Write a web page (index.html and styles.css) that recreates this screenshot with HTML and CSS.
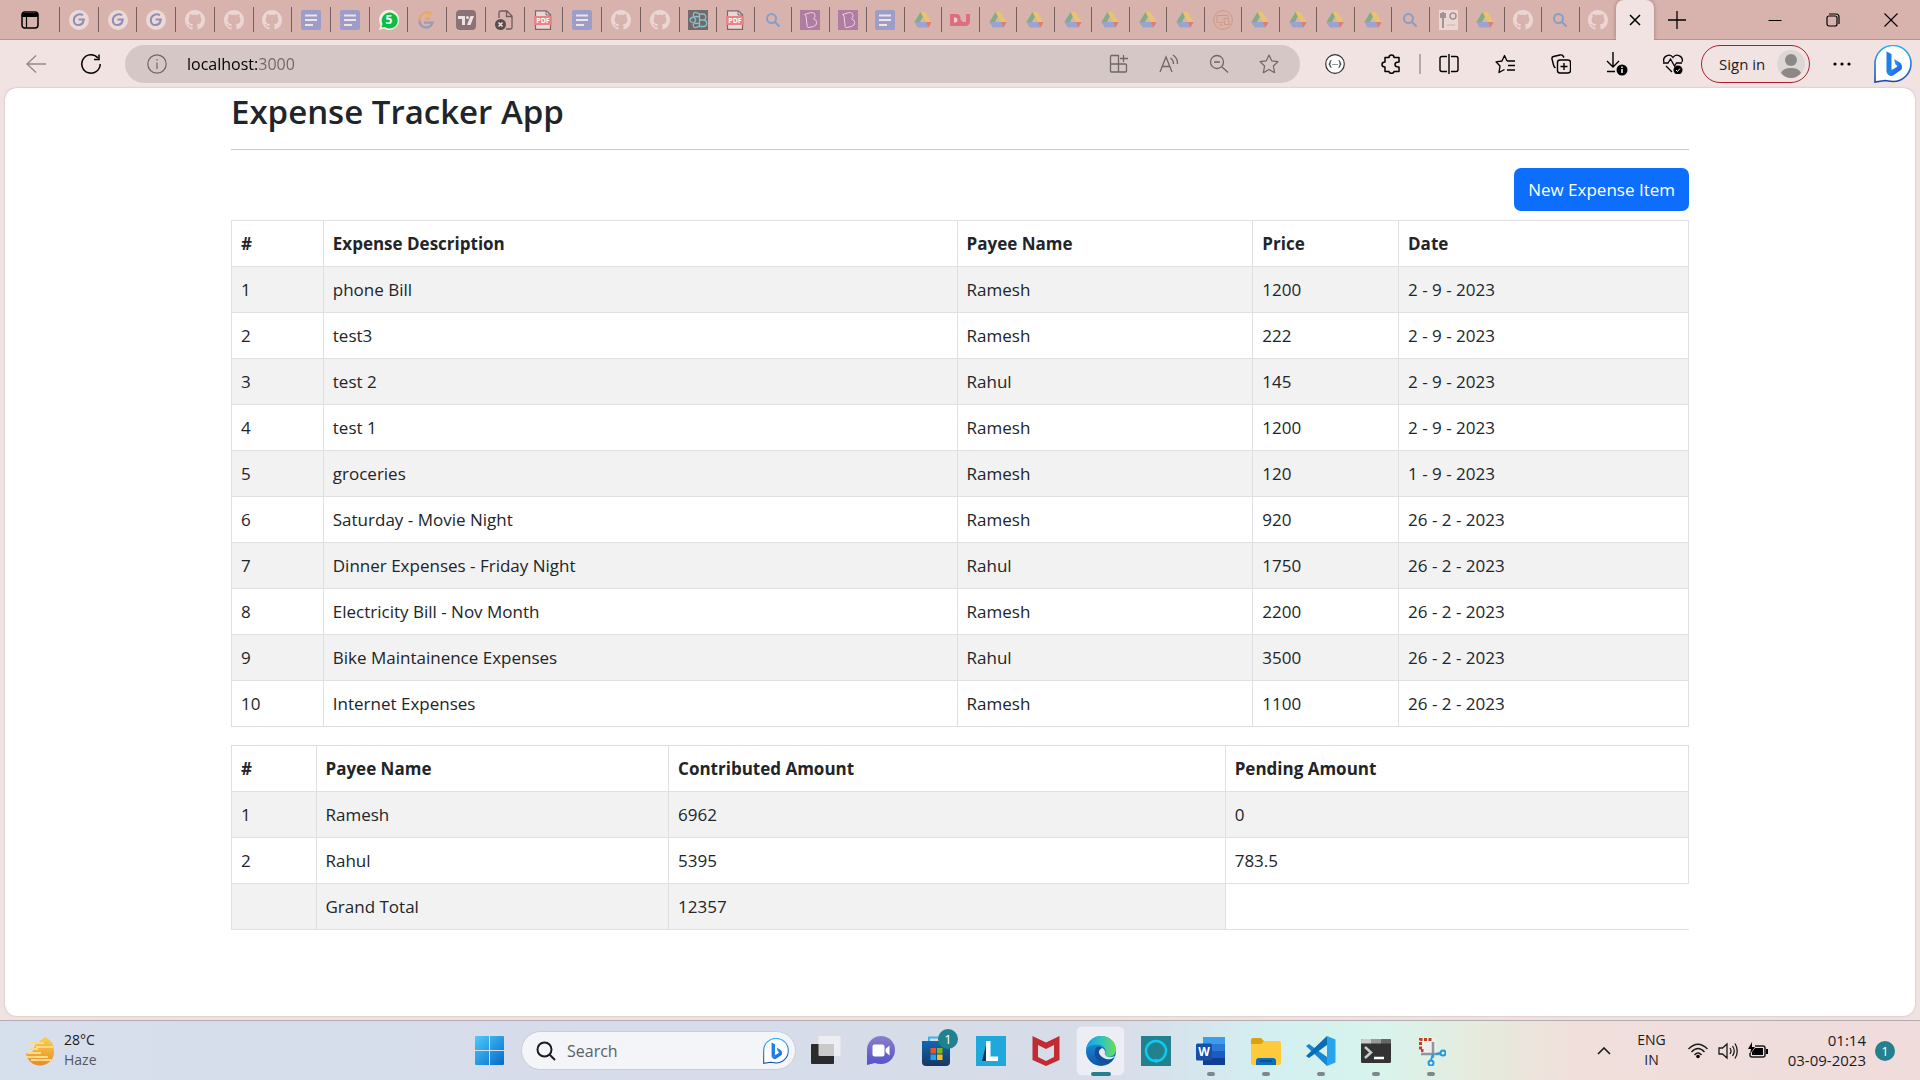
FILE: index.html
```html
<!DOCTYPE html>
<html lang="en">
<head>
<meta charset="utf-8">
<title>Expense Tracker App</title>
<link rel="stylesheet" href="styles.css">
</head>
<body>
<svg class="sprite" aria-hidden="true">
  <defs>
    <linearGradient id="bing-blue" x1="0" y1="0" x2="1" y2="1"><stop offset="0" stop-color="#37bdf5"/><stop offset="1" stop-color="#174ae4"/></linearGradient>
    <linearGradient id="bing-ring" x1="0" y1="0" x2="0" y2="1"><stop offset="0" stop-color="#2fb4ee"/><stop offset="1" stop-color="#1b48ae"/></linearGradient>
    <linearGradient id="win-blue" x1="0" y1="0" x2="1" y2="1"><stop offset="0" stop-color="#4dcbfb"/><stop offset="1" stop-color="#0669c9"/></linearGradient>
    <linearGradient id="edge-green" x1="0" y1="0" x2="1" y2="0"><stop offset="0" stop-color="#1a9de0"/><stop offset="0.5" stop-color="#2cc4c4"/><stop offset="1" stop-color="#6fdc52"/></linearGradient>
    <linearGradient id="edge-blue" x1="0" y1="0" x2="0" y2="1"><stop offset="0" stop-color="#1d9be2"/><stop offset="1" stop-color="#0d55a8"/></linearGradient>
    <linearGradient id="chat" x1="0" y1="0" x2="0" y2="1"><stop offset="0" stop-color="#8a80c8"/><stop offset="1" stop-color="#5551cc"/></linearGradient>
    <linearGradient id="sun" x1="0" y1="0" x2="0" y2="1"><stop offset="0" stop-color="#fbd14b"/><stop offset="1" stop-color="#ea8a26"/></linearGradient>
    <linearGradient id="store" x1="0" y1="0" x2="0" y2="1"><stop offset="0" stop-color="#1266b3"/><stop offset="1" stop-color="#173760"/></linearGradient>
    <linearGradient id="g-warm" x1="0" y1="0" x2="0" y2="1"><stop offset="0.4" stop-color="#e9a66e"/><stop offset="0.7" stop-color="#9a9ab8"/></linearGradient>
  </defs>
  <symbol id="f-g" viewBox="0 0 20 20"><circle cx="10" cy="10" r="10" fill="#ecd9d6"/><path d="M14 5.2C10 3 4.800 5.500 4.800 10.500c0 6 9 6.500 10-1H9.500" fill="none" stroke="#8d8fb7" stroke-width="2"/></symbol>
  <symbol id="f-gwarm" viewBox="0 0 20 20"><path d="M15 4.500C10-.5 2 4 2.500 11c.5 8 11 8.500 13 1.500H7M13 8.500H8" fill="none" stroke="url(#g-warm)" stroke-width="2.500"/><path d="M8 8.500c1-3 5-5 8-3" fill="none" stroke="#e9b269" stroke-width="2"/></symbol>
  <symbol id="f-gh" viewBox="0 0 16 16"><path fill="#ecd6d3" d="M8 0C3.580 0 0 3.580 0 8c0 3.540 2.290 6.530 5.470 7.590.4.070.55-.17.55-.38 0-.19-.01-.82-.01-1.490-2.010.37-2.530-.49-2.690-.94-.09-.23-.48-.94-.82-1.130-.28-.15-.68-.52-.01-.53.63-.01 1.080.58 1.230.82.72 1.210 1.870.87 2.330.66.070-.52.28-.87.51-1.070-1.780-.2-3.640-.89-3.640-3.950 0-.87.31-1.590.82-2.150-.08-.2-.36-1.020.08-2.120 0 0 .67-.21 2.200.82.64-.18 1.320-.27 2-.27s1.360.09 2 .27c1.530-1.040 2.200-.82 2.200-.82.44 1.100.16 1.920.08 2.120.51.56.82 1.270.82 2.150 0 3.070-1.870 3.750-3.650 3.950.29.25.54.73.54 1.480 0 1.070-.01 1.930-.01 2.200 0 .21.15.46.55.38A8.010 8.010 0 0 0 16 8c0-4.420-3.580-8-8-8z"/></symbol>
  <symbol id="f-doc" viewBox="0 0 20 20"><rect width="20" height="20" rx="2" fill="#9c9dc9"/><path d="M4 5.500h12M4 10h12M4 15h8" stroke="#f1e2e4" stroke-width="2"/></symbol>
  <symbol id="f-17" viewBox="0 0 20 20"><rect width="20" height="20" rx="4" fill="#8a7376"/><path d="M2 6h7v9H6V9H2zM14.500 6H18l-3.500 9H11z" fill="#f1e2e1"/><circle cx="11.500" cy="7.500" r="1.500" fill="#f1e2e1"/></symbol>
  <symbol id="f-filex" viewBox="0 0 20 20"><path d="M4 8V2.500Q4 1 5.500 1H12l5 5v11.500q0 1.500-1.500 1.500H11M11.500 1v5.500H17" fill="none" stroke="#6e5c5a" stroke-width="1.300"/><circle cx="5.500" cy="14.500" r="5.500" fill="#5b4c4b"/><path d="M3.500 12.500l4 4m0-4l-4 4" stroke="#f1e2e1" stroke-width="1.500"/></symbol>
  <symbol id="f-react" viewBox="0 0 20 20"><rect width="20" height="20" fill="#74686a"/><g fill="none" stroke="#7fc5c9" stroke-width="1.300"><path d="M11.500 4v12.500h4c4.500 0 4-6.500 0-6.500h-4 3.500c4 0 3.500-6 0-6z"/><path d="M11 6.500C-1 6.500-1 13.500 11 13.500M11 4C6 0 3 4 8 10M8 10C3 16 6 20 11 16"/></g></symbol>
  <symbol id="f-search" viewBox="0 0 20 20"><circle cx="8.500" cy="8.500" r="4.500" fill="none" stroke="#8a9dc2" stroke-width="2"/><path d="M12 12l4.500 4.500" stroke="#8a9dc2" stroke-width="2.200"/></symbol>
  <symbol id="f-b" viewBox="0 0 20 20"><rect width="20" height="20" fill="#b07ca2"/><path d="M4.500 4.500l6-1.800q4.200-.7 4.500 2.800.1 2.300-1.500 3.300 3 .8 3.200 3.700 0 3-3.200 4l-5.500 1.200-.8-1.200L6 6z" fill="none" stroke="#ead3e0" stroke-width="1"/></symbol>
  <symbol id="f-drive" viewBox="0 0 20 20"><path d="M7.500 2h5L5 17.500 1.500 12z" fill="#82ad84"/><path d="M7.500 2h5l6 10h-6z" fill="#e8c372"/><path d="M1.500 12L5 17.500h10.500L18.500 12z" fill="#9da3cf"/><path d="M13 12h5.500l-3 5.500z" fill="#e07d72"/><path d="M10 6.500l3 5.500H7z" fill="#d8b3ad"/></symbol>
  <symbol id="f-dj" viewBox="0 0 20 20"><path d="M0 4h7q3.500 0 3.500 5.500L13 12h3V4h4v7q0 5-5 5H0z" fill="#df6d80"/><path d="M4 7.500h1.500q2 0 2 2.500t-2 2.500H4z" fill="#e9cdca"/></symbol>
  <symbol id="f-screen" viewBox="0 0 20 20"><g fill="none" stroke="#cf9785" stroke-width="1"><circle cx="10" cy="10" r="9.400"/><path d="M4 5.500h11v3M4 5.500v7h6M6 15h4M11 8.500h4l1.500 6h-5z"/></g></symbol>
  <symbol id="f-pic" viewBox="0 0 20 20"><rect x="1" width="19" height="20" fill="#ead7d4"/><path d="M5 2v16M3 3v5M7 3v5" stroke="#a59391" stroke-width="2"/><circle cx="15" cy="6" r="3" fill="none" stroke="#a59391" stroke-width="1.500"/><path d="M9 15h8" stroke="#c9b1ae"/></symbol>
  <symbol id="bing" viewBox="0 0 38 38"><path d="M1 37V18.500A18 18 0 1 1 19 36.500Q14 36 11 35.500z" fill="#fff" stroke="url(#bing-ring)" stroke-width="1.600"/><path d="M12.500 6.500l5 2.500v17l-1 4-4-3z" fill="#1f7fe8"/><path d="M20 14l6 3.500q3 3 1.500 7l-8.500 6q-4 1.500-6.500-3l9.500-5 1.500-1.500-2-1.500z" fill="url(#bing-blue)"/></symbol>
</svg>

<header class="browser">
  <div class="tabstrip">
    <button class="tab-menu" aria-label="Tab actions"><svg width="18" height="18" viewBox="0 0 18 18"><rect x="1" y="1" width="16" height="16" rx="3" fill="none" stroke="#000" stroke-width="1.500"/><path d="M1 2h16v4H1z"/><path d="M5.500 5v12" stroke="#000" stroke-width="1.200"/></svg></button>
    <nav class="tabs" aria-label="Open tabs">
      <button class="tab wide" aria-label="Tab"><svg><use href="#f-g"/></svg></button>
      <button class="tab wide" aria-label="Tab"><svg><use href="#f-g"/></svg></button>
      <button class="tab wide" aria-label="Tab"><svg><use href="#f-g"/></svg></button>
      <button class="tab wide" aria-label="Tab"><svg><use href="#f-gh"/></svg></button>
      <button class="tab wide" aria-label="Tab"><svg><use href="#f-gh"/></svg></button>
      <button class="tab wide" aria-label="Tab"><svg><use href="#f-gh"/></svg></button>
      <button class="tab wide" aria-label="Tab"><svg><use href="#f-doc"/></svg></button>
      <button class="tab wide" aria-label="Tab"><svg><use href="#f-doc"/></svg></button>
      <button class="tab wide" aria-label="Tab"><svg viewBox="0 0 20 20"><path d="M0 20l1.500-5A10 10 0 1 1 5 18.500z" fill="#f6eeee"/><path d="M2.500 17.500l1-3.500A8 8 0 1 1 6 17z" fill="#0fbd42"/><text x="10" y="14" class="icon-text t-count">5</text></svg></button>
      <button class="tab wide" aria-label="Tab"><svg><use href="#f-gwarm"/></svg></button>
      <button class="tab wide" aria-label="Tab"><svg><use href="#f-17"/></svg></button>
      <button class="tab wide" aria-label="Tab"><svg><use href="#f-filex"/></svg></button>
      <button class="tab wide" aria-label="Tab"><svg viewBox="0 0 20 20"><path d="M2.500.8h11l4 4v14.500h-15z" fill="#ead8d5" stroke="#7b6866" stroke-width="1.200"/><path d="M13 1v4h4.500" fill="none" stroke="#7b6866"/><rect x="1" y="6" width="18" height="9" rx="1" fill="#e88484"/><text x="10" y="13" class="icon-text t-pdf">PDF</text></svg></button>
      <button class="tab wide" aria-label="Tab"><svg><use href="#f-doc"/></svg></button>
      <button class="tab wide" aria-label="Tab"><svg><use href="#f-gh"/></svg></button>
      <button class="tab wide" aria-label="Tab"><svg><use href="#f-gh"/></svg></button>
      <button class="tab" aria-label="Tab"><svg><use href="#f-react"/></svg></button>
      <button class="tab" aria-label="Tab"><svg viewBox="0 0 20 20"><path d="M2.500.8h11l4 4v14.500h-15z" fill="#ead8d5" stroke="#7b6866" stroke-width="1.200"/><path d="M13 1v4h4.500" fill="none" stroke="#7b6866"/><rect x="1" y="6" width="18" height="9" rx="1" fill="#e88484"/><text x="10" y="13" class="icon-text t-pdf">PDF</text></svg></button>
      <button class="tab" aria-label="Tab"><svg><use href="#f-search"/></svg></button>
      <button class="tab" aria-label="Tab"><svg><use href="#f-b"/></svg></button>
      <button class="tab" aria-label="Tab"><svg><use href="#f-b"/></svg></button>
      <button class="tab" aria-label="Tab"><svg><use href="#f-doc"/></svg></button>
      <button class="tab" aria-label="Tab"><svg><use href="#f-drive"/></svg></button>
      <button class="tab" aria-label="Tab"><svg><use href="#f-dj"/></svg></button>
      <button class="tab" aria-label="Tab"><svg><use href="#f-drive"/></svg></button>
      <button class="tab" aria-label="Tab"><svg><use href="#f-drive"/></svg></button>
      <button class="tab" aria-label="Tab"><svg><use href="#f-drive"/></svg></button>
      <button class="tab" aria-label="Tab"><svg><use href="#f-drive"/></svg></button>
      <button class="tab" aria-label="Tab"><svg><use href="#f-drive"/></svg></button>
      <button class="tab" aria-label="Tab"><svg><use href="#f-drive"/></svg></button>
      <button class="tab" aria-label="Tab"><svg><use href="#f-screen"/></svg></button>
      <button class="tab" aria-label="Tab"><svg><use href="#f-drive"/></svg></button>
      <button class="tab" aria-label="Tab"><svg><use href="#f-drive"/></svg></button>
      <button class="tab" aria-label="Tab"><svg><use href="#f-drive"/></svg></button>
      <button class="tab" aria-label="Tab"><svg><use href="#f-drive"/></svg></button>
      <button class="tab" aria-label="Tab"><svg><use href="#f-search"/></svg></button>
      <button class="tab" aria-label="Tab"><svg><use href="#f-pic"/></svg></button>
      <button class="tab" aria-label="Tab"><svg><use href="#f-drive"/></svg></button>
      <button class="tab" aria-label="Tab"><svg><use href="#f-gh"/></svg></button>
      <button class="tab" aria-label="Tab"><svg><use href="#f-search"/></svg></button>
      <button class="tab" aria-label="Tab"><svg><use href="#f-gh"/></svg></button>
    </nav>
    <button class="tab-active" aria-label="Close tab"><svg width="12" height="12" viewBox="0 0 12 12"><path d="M1 1l10 10M11 1L1 11" stroke="#000" stroke-width="1.500"/></svg></button>
    <button class="tab-new" aria-label="New tab"><svg width="18" height="18" viewBox="0 0 18 18"><path d="M9 0v18M0 9h18" stroke="#000" stroke-width="1.300"/></svg></button>
    <div class="window-controls">
      <button aria-label="Minimize"><svg width="14" height="14" viewBox="0 0 14 14"><path d="M.5 7.500h13" stroke="#000" stroke-width="1"/></svg></button>
      <button aria-label="Restore"><svg width="14" height="14" viewBox="0 0 14 14"><rect x="1" y="3" width="10" height="10" rx="2" fill="none" stroke="#000" stroke-width="1.200"/><path d="M3 1h7q3 0 3 3v7" fill="none" stroke="#000" stroke-width="1.200"/></svg></button>
      <button aria-label="Close"><svg width="14" height="14" viewBox="0 0 14 14"><path d="M.5.5l13 13m0-13l-13 13" stroke="#000" stroke-width="1.100"/></svg></button>
    </div>
  </div>

  <div class="toolbar">
    <button class="nav-button" aria-label="Back"><svg width="20" height="20" viewBox="0 0 20 20" fill="none" stroke="#93898a" stroke-width="1.300"><path d="M20 10H1M10 1.500L1 10l9 8.500"/></svg></button>
    <button class="nav-button" aria-label="Refresh"><svg width="20" height="20" viewBox="0 0 20 20" fill="none" stroke="#000" stroke-width="1.500"><path d="M17 4A9.200 9.200 0 1 0 19.200 10"/><path d="M18 .5v5h-5"/></svg></button>
    <div class="address">
      <svg width="20" height="20" viewBox="0 0 20 20" fill="none" stroke="#6f6667" stroke-width="1.200"><circle cx="10" cy="10" r="9.200"/><path d="M10 8.500V15M10 5v1.500"/></svg>
      <input class="address-input" type="text" aria-label="Address" value="localhost:3000">
      <div class="address-actions">
        <button aria-label="Apps"><svg width="20" height="20" viewBox="0 0 20 20" fill="none" stroke="#6f6667" stroke-width="1.300"><path d="M1.500 10V2.500q0-1 1-1h7V18M1.500 10v7q0 1 1 1h14q1 0 1-1v-6q0-1-1-1zM14.500 1v7M11 4.500h8"/></svg></button>
        <button aria-label="Read aloud"><svg width="20" height="20" viewBox="0 0 20 20" fill="none" stroke="#6f6667" stroke-width="1.300"><path d="M1 18L7 3l6 15M3 12.500h8M11.500 4q3 2 3 6M14 1q5 3.500 4.500 9"/></svg></button>
        <button aria-label="Zoom out"><svg width="20" height="20" viewBox="0 0 20 20" fill="none" stroke="#6f6667" stroke-width="1.300"><circle cx="8" cy="8" r="6.500"/><path d="M13 13l6 5.500M5 8h6"/></svg></button>
        <button aria-label="Add to favourites"><svg width="20" height="20" viewBox="0 0 20 20" fill="none" stroke="#6f6667" stroke-width="1.200" stroke-linejoin="round"><path d="M10 1l2.700 5.800 6.300.8-4.600 4.400 1.200 6.700L10 15.500l-5.600 3.200L5.600 12 1 7.600l6.300-.8z"/></svg></button>
      </div>
    </div>
    <div class="tools">
      <button aria-label="JSON viewer"><svg width="20" height="20" viewBox="0 0 20 20" fill="none" stroke="#333" stroke-width="1.200"><circle cx="10" cy="10" r="9.300" fill="#fff"/><path d="M6.500 6.500q-1.500 0-1.500 2T3.800 10q1.200 0 1.200 1.500t1.500 2M13.500 6.500q1.500 0 1.500 2t1.200 1.500q-1.200 0-1.200 1.500t-1.500 2"/><path d="M7.500 10.500h5" stroke-dasharray="1 1"/></svg></button>
      <button aria-label="Extensions"><svg width="20" height="20" viewBox="0 0 20 20" fill="none" stroke="#000" stroke-width="1.500" stroke-linejoin="round"><path d="M4 3.500h4Q8 1 10.500 1T13 3.500h5v4.500q-4 0-4 2.500t4 2.500v4.500h-5q0 1.800-2.500 1.800T8 17.500H4v-4.500q-3 0-3-2.500T4 8z"/></svg></button>
      <span class="divider"></span>
      <button aria-label="Split screen"><svg width="20" height="20" viewBox="0 0 20 20" fill="none" stroke="#000" stroke-width="1.400"><path d="M8 2.500H3q-2 0-2 2v11q0 2 2 2h5M12 2.500h5q2 0 2 2v11q0 2-2 2h-5M10 0v20"/></svg></button>
      <button aria-label="Favourites"><svg width="20" height="20" viewBox="0 0 20 20" fill="none" stroke="#000" stroke-width="1.300" stroke-linejoin="round"><path d="M12 7L9.500 1.500 7 7l-6 .8L5 12l-1 6.500 5.500-3M12 7h8M13 11.500h7M12 16h8"/></svg></button>
      <button aria-label="Collections"><svg width="20" height="20" viewBox="0 0 20 20" fill="none" stroke="#000" stroke-width="1.400"><rect x="6.500" y="6" width="13" height="13" rx="2.500"/><path d="M13 9v7M9.500 12.500h7M4.500 14q-1.500-1-2-3L1 5q-.5-2 1.500-2.500L9 1q2-.5 3 1l1 1.500"/></svg></button>
      <button aria-label="Downloads"><svg width="22" height="24" viewBox="0 0 22 24"><path d="M7 0v15M1 9l6 6 6-6M1 19.500h8" fill="none" stroke="#000" stroke-width="1.400"/><circle cx="16" cy="18" r="5.500"/><path d="M16 17v4M16 14.500V16" stroke="#fff" stroke-width="1.500"/></svg></button>
      <button aria-label="Browser essentials"><svg width="22" height="20" viewBox="0 0 22 20"><path d="M2 8C0 2 8-1 11 3.500 14-1 22 2 20 8M1 9h5l2.500-4 4 7 2-3H20M4 12l6 6" fill="none" stroke="#000" stroke-width="1.300"/><circle cx="16" cy="16" r="4.500"/><path d="M14 16l1.500 1.500 2.500-3" fill="none" stroke="#fff"/></svg></button>
    </div>
    <button class="sign-in">Sign in
      <svg width="28" height="28" viewBox="0 0 28 28"><circle cx="14" cy="14" r="14" fill="#dcd7d4"/><circle cx="14" cy="10" r="6" fill="#8c8885"/><path d="M4 23q2-5 10-5t10 5q-4 5-10 5T4 23z" fill="#8c8885"/></svg>
    </button>
    <button class="more" aria-label="Settings and more"><svg width="18" height="4" viewBox="0 0 18 4"><circle cx="2" cy="2" r="1.600"/><circle cx="9" cy="2" r="1.600"/><circle cx="16" cy="2" r="1.600"/></svg></button>
    <button class="bing-button" aria-label="Bing"><svg width="38" height="38"><use href="#bing"/></svg></button>
  </div>
</header>

<main class="page">
  <div class="container">
    <h1>Expense Tracker App</h1>
    <div class="actions"><button class="primary">New Expense Item</button></div>
    <table class="expenses">
      <colgroup><col class="c-num"><col class="c-desc"><col class="c-payee"><col class="c-price"><col class="c-date"></colgroup>
      <thead><tr><th>#</th><th>Expense Description</th><th>Payee Name</th><th>Price</th><th>Date</th></tr></thead>
      <tbody>
        <tr><td>1</td><td>phone Bill</td><td>Ramesh</td><td>1200</td><td>2 - 9 - 2023</td></tr>
        <tr><td>2</td><td>test3</td><td>Ramesh</td><td>222</td><td>2 - 9 - 2023</td></tr>
        <tr><td>3</td><td>test 2</td><td>Rahul</td><td>145</td><td>2 - 9 - 2023</td></tr>
        <tr><td>4</td><td>test 1</td><td>Ramesh</td><td>1200</td><td>2 - 9 - 2023</td></tr>
        <tr><td>5</td><td>groceries</td><td>Ramesh</td><td>120</td><td>1 - 9 - 2023</td></tr>
        <tr><td>6</td><td>Saturday - Movie Night</td><td>Ramesh</td><td>920</td><td>26 - 2 - 2023</td></tr>
        <tr><td>7</td><td>Dinner Expenses - Friday Night</td><td>Rahul</td><td>1750</td><td>26 - 2 - 2023</td></tr>
        <tr><td>8</td><td>Electricity Bill - Nov Month</td><td>Ramesh</td><td>2200</td><td>26 - 2 - 2023</td></tr>
        <tr><td>9</td><td>Bike Maintainence Expenses</td><td>Rahul</td><td>3500</td><td>26 - 2 - 2023</td></tr>
        <tr><td>10</td><td>Internet Expenses</td><td>Ramesh</td><td>1100</td><td>26 - 2 - 2023</td></tr>
      </tbody>
    </table>
    <table class="totals">
      <colgroup><col class="t-num"><col class="t-payee"><col class="t-paid"><col class="t-due"></colgroup>
      <thead><tr><th>#</th><th>Payee Name</th><th>Contributed Amount</th><th>Pending Amount</th></tr></thead>
      <tbody>
        <tr><td>1</td><td>Ramesh</td><td>6962</td><td>0</td></tr>
        <tr><td>2</td><td>Rahul</td><td>5395</td><td>783.5</td></tr>
        <tr><td></td><td>Grand Total</td><td>12357</td></tr>
      </tbody>
    </table>
  </div>
</main>

<footer class="taskbar">
  <div class="weather">
    <svg width="30" height="30" viewBox="0 0 30 30"><path d="M20 1q9 4 9 14a14 13.500 0 0 1-28 2h6l3-8z" fill="url(#sun)"/><path d="M5 7h14M11 11h17M5 13h8M2 17h14M1 21h22M6 24h20" stroke="#f8dc8a" stroke-width="2"/></svg>
    <div class="two-lines"><span>28°C</span><span class="muted">Haze</span></div>
  </div>
  <div class="apps">
    <button class="app" aria-label="Start"><svg width="30" height="30" viewBox="0 0 30 30" fill="url(#win-blue)"><path d="M0 1q0-1 1-1h13v14H0zM15 0h13q1 0 1 1v13H15zM0 15h14v14H1q-1 0-1-1zM15 15h14v13q0 1-1 1H15z"/></svg></button>
    <div class="search">
      <svg width="20" height="20" viewBox="0 0 20 20" fill="none" stroke="#1c1c1c" stroke-width="2"><circle cx="8.500" cy="8.500" r="7"/><path d="M13.500 13.500L19 19"/></svg>
      <input type="text" aria-label="Search" placeholder="Search">
      <svg width="26" height="26"><use href="#bing"/></svg>
    </div>
    <button class="app" aria-label="Task view"><svg width="30" height="30" viewBox="0 0 30 30"><rect y="8" width="23" height="20" rx="1" fill="#2b2b2b"/><rect x="7.500" width="22" height="20" rx="1" fill="#f2f2f2" fill-opacity=".8"/></svg></button>
    <button class="app" aria-label="Chat"><svg width="30" height="30" viewBox="0 0 30 30"><path d="M1 29V14A14 14 0 1 1 15 28q-4 0-6-1z" fill="url(#chat)"/><rect x="6.500" y="8.500" width="12" height="12" rx="2" fill="#fff"/><path d="M19.500 13l4-3.500v10L19.500 16z" fill="#fff"/></svg></button>
    <button class="app" aria-label="Store"><svg width="30" height="32" viewBox="0 0 30 32"><path d="M8 7V2.500h13V7" fill="none" stroke="#39b3f2" stroke-width="2"/><path d="M1 6h28v21q0 4-4 4H5q-4 0-4-4z" fill="url(#store)"/><path d="M9.500 13H15v5.500H9.500z" fill="#ef5028"/><path d="M16 13h5.500v5.500H16z" fill="#7fba00"/><path d="M9.500 19.500H15V25H9.500z" fill="#1ba7ef"/><path d="M16 19.500h5.500V25H16z" fill="#fdb813"/></svg><span class="badge">1</span></button>
    <button class="app" aria-label="L app"><svg width="30" height="30" viewBox="0 0 30 30"><path fill="#1fa8dc" d="M0 0h30v30H0z"/><path d="M11 5L6 25h4l3-4z" fill="#13325e"/><path d="M10 5h4.500v15.500H22V25H10z" fill="#fff"/></svg></button>
    <button class="app" aria-label="McAfee"><svg width="30" height="32" viewBox="0 0 30 32"><path d="M1.500 1L15 7.500 28.500 1v24L15 31 1.500 25zM7 10v12l8 4 8-4V10l-8 4z" fill="#c12b31" fill-rule="evenodd"/></svg></button>
    <button class="app active" aria-label="Edge"><svg width="32" height="32" viewBox="0 0 32 32"><circle cx="16" cy="16" r="15" fill="url(#edge-blue)"/><path d="M1 15C2 6 9 1 16 1c9 0 15 6 15 13 0 5-3 8-8 8-4 0-5-2-3-4 2-3-1-7-5-8C9 9 3 10 1 15z" fill="url(#edge-green)"/><path d="M11 13c-4 8 2 16 11 16 3-1 6-3 7-6-4 3-9 2-12-1-3-3-2-6 0-9-2-2-5-1-6 0z" fill="#144f9e"/><path d="M17 13q-5 3-2 7 4 5 11 4 3-1 4-3-8 3-10-1c-1-2 2-4-3-7z" fill="#e8ebf4"/></svg></button>
    <button class="app" aria-label="Alexa"><svg width="30" height="30" viewBox="0 0 30 30"><path fill="#23808d" d="M0 0h30v30H0z"/><circle cx="15" cy="15" r="10" fill="none" stroke="#0ccbf3" stroke-width="2.500"/><path d="M13.500 22.500l1 4.500q5-1 8-5-4 2.500-9 .5z" fill="#0ccbf3"/></svg></button>
    <button class="app running" aria-label="Word"><svg width="30" height="30" viewBox="0 0 30 30"><path d="M7 1h22v8H7z" fill="#3f9cec"/><path d="M7 8h22v7.500H7z" fill="#2a7bd6"/><path d="M7 15h22v7H7z" fill="#1a5cc0"/><path d="M7 22h22v7H7z" fill="#0f3f92"/><rect y="7.500" width="16" height="17" rx="1.500" fill="#174ea6"/><text x="8" y="20" class="icon-text t-count">W</text></svg></button>
    <button class="app running" aria-label="File Explorer"><svg width="30" height="30" viewBox="0 0 30 30"><path d="M0 4q0-2 2-2h8l3 3h16v8H0z" fill="#dba013"/><path d="M0 8h10l3-3h15q2 0 2 2v20q0 2-2 2H2q-2 0-2-2z" fill="#fdca3c"/><path d="M5 29v-4q0-3 3-3h14q3 0 3 3v4z" fill="#0b6dc0"/><path d="M9 25h12" stroke="#0b4a86" stroke-width="1.500"/></svg></button>
    <button class="app running" aria-label="VS Code"><svg width="30" height="32" viewBox="0 0 30 32"><path d="M0 11l3-2 18 13v9z" fill="#1488d4"/><path d="M0 21l3 2L21 10V1z" fill="#0a6db4"/><path d="M21 1l8.500 3.500v23L21 31z" fill="#28a4ef"/></svg></button>
    <button class="app running" aria-label="Terminal"><svg width="30" height="24" viewBox="0 0 30 24"><rect width="30" height="24" rx="1.500" fill="#333"/><path d="M0 1.500Q0 0 1.500 0H10v4.500H0z" fill="#ccc"/><path d="M10 0h10v4.500H10z" fill="#999"/><path d="M20 0h8.500Q30 0 30 1.500v3H20z" fill="#666"/><path d="M4 8l6 5.500L4 19" fill="none" stroke="#ccc" stroke-width="2.500"/><path d="M13 19h10" stroke="#fff" stroke-width="2.500"/></svg></button>
    <button class="app running" aria-label="Snipping Tool"><svg width="30" height="30" viewBox="0 0 30 30"><path d="M3 1h17v16H3z" fill="#efeeee"/><path d="M15.500 3.500h-11v11h3" fill="none" stroke="#c43d1c" stroke-width="3" stroke-dasharray="3 1.500"/><path d="M17 6v16M5 18h19" stroke="#8b959e" stroke-width="2.500"/><g fill="none" stroke="#1e9be3" stroke-width="2"><circle cx="27" cy="17" r="2.500"/><circle cx="15" cy="27" r="2.500"/><path d="M17 18l-2 6M20 18l5-1"/></g></svg></button>
  </div>
  <div class="tray">
    <button aria-label="Show hidden icons"><svg width="14" height="8" viewBox="0 0 14 8"><path d="M1 7l6-6 6 6" fill="none" stroke="#1b1b1b" stroke-width="1.600"/></svg></button>
    <div class="two-lines language"><span>ENG</span><span>IN</span></div>
    <div class="status">
      <svg width="20" height="16" viewBox="0 0 20 16"><g fill="none" stroke="#1b1b1b" stroke-width="1.400"><path d="M.5 6Q10-3.500 19.500 6M3.500 9Q10 2 16.500 9M6.500 12Q10 8 13.500 12"/></g><circle cx="10" cy="13.500" r="1.800"/></svg>
      <svg width="20" height="18" viewBox="0 0 20 18" fill="none" stroke="#1b1b1b" stroke-width="1.300"><path d="M1 6h3.500L9 2v14l-4.500-4H1zM12 6q2 3 0 6M14.500 4q3.500 5 0 10M17 1.500q4.500 7.500 0 15"/></svg>
      <svg width="20" height="18" viewBox="0 0 20 18"><path d="M7 4h8q2 0 2 2v7q0 2-2 2H4q-2 0-2-2v-2" fill="none" stroke="#1b1b1b" stroke-width="1.500"/><path d="M18 7h2v5h-2zM7 6h8v7H4v-3zM4 0L0 7h3L2 12l5-7H4z"/></svg>
    </div>
    <div class="two-lines clock"><span>01:14</span><span>03-09-2023</span></div>
    <span class="count">1</span>
  </div>
</footer>
</body>
</html>
```

FILE: styles.css
```css
* { box-sizing: border-box; }

body {
  margin: 0;
  min-height: 100vh;
  display: flex;
  flex-direction: column;
  background: #f0e2e1;
  color: #212529;
  font: 17px/27px "Open Sans", "Noto Sans", sans-serif;
}

button {
  display: flex;
  align-items: center;
  justify-content: center;
  padding: 0;
  border: 0;
  background: none;
  color: inherit;
  font: inherit;
}

input {
  min-width: 0;
  padding: 0;
  border: 0;
  outline: 0;
  background: none;
  font: inherit;
}

svg { flex: none; }
.sprite { position: absolute; width: 0; height: 0; }

.icon-text { font-family: "Open Sans", sans-serif; font-weight: 700; fill: #fff; text-anchor: middle; }
.t-count { font-size: 12px; }
.t-pdf { font-size: 7px; }

/* Tab strip */
.tabstrip {
  display: flex;
  height: 40px;
  background: #d8b3ad;
  border-bottom: 1px solid #b8928d;
}
.tab-menu { width: 59px; }
.tabs { display: flex; flex: 1; min-width: 0; align-items: center; }
.tab {
  flex: 30 1 0;
  height: 25px;
  border-left: 1px solid #75605d;
}
.tab.wide { flex-grow: 31; }
.tab svg { width: 20px; height: 20px; }
.tab-active {
  width: 38px;
  height: 40px;
  background: #f0e3e2;
  border-radius: 8px 8px 0 0;
  box-shadow: 0 0 4px #9b7a76;
  clip-path: inset(0 -6px);
}
.tab-new { width: 46px; }
.window-controls { display: flex; margin-left: 46px; }
.window-controls button { width: 58px; }

/* Toolbar */
.toolbar {
  display: flex;
  align-items: center;
  height: 48px;
  padding: 0 8px;
  background: #f0e3e2;
}
.nav-button { width: 55px; }
.address {
  display: flex;
  flex: 1;
  align-items: center;
  height: 38px;
  margin: 0 7px;
  padding: 0 6px 0 22px;
  border-radius: 19px;
  background: #d5c7c6;
}
.address-input {
  flex: 1;
  margin-left: 20px;
  font-size: 16px;
  color: transparent;
  background: linear-gradient(to right, #000 70px, #6f6667 70px);
  -webkit-background-clip: text;
  background-clip: text;
}
.address-actions { display: flex; }
.address-actions button { width: 50px; }
.tools { display: flex; align-items: center; }
.tools button { width: 56px; }
.divider { width: 2px; height: 20px; background: #b5a9a8; }
.sign-in {
  justify-content: space-between;
  width: 109px;
  height: 38px;
  padding: 0 4px 0 17px;
  border: 1px solid #a8202c;
  border-radius: 19px;
  color: #1b1b1b;
  font-size: 15px;
}
.more { width: 64px; }
.bing-button { width: 38px; height: 38px; }

/* Page */
.page {
  flex: 1;
  margin: 0 5px 4px;
  border-radius: 12px;
  background: #fff;
  box-shadow: 0 0 2px #bfa9a7;
}
.container { max-width: 1458px; margin: 0 auto; }
h1 {
  margin: 0 0 18px;
  padding: 2px 0 16px;
  border-bottom: 1px solid #c8c9ca;
  font-size: 33px;
  line-height: 43px;
  font-weight: 600;
}
.actions { display: flex; justify-content: flex-end; margin-bottom: 9px; }
.primary {
  height: 43px;
  padding: 0 14px;
  border-radius: 7px;
  background: #0d6efd;
  color: #fff;
}

table {
  width: 100%;
  table-layout: fixed;
  border-collapse: collapse;
  margin-bottom: 18px;
}
tr { border: solid #dee2e6; border-width: 1px 0; }
th, td {
  height: 46px;
  padding: 9px;
  border: 1px solid #dee0e3;
  text-align: left;
}
th { font-weight: 700; }
tbody tr:nth-child(odd) td { background: #f2f2f2; }

.c-num { width: 6.3%; }
.c-desc { width: 43.5%; }
.c-payee { width: 20.3%; }
.c-price { width: 10%; }
.c-date { width: 19.9%; }
.t-num { width: 5.8%; }
.t-payee { width: 24.2%; }
.t-paid { width: 38.2%; }
.t-due { width: 31.8%; }

/* Taskbar */
.taskbar {
  display: grid;
  grid-template-columns: 1fr auto 1fr;
  align-items: center;
  height: 60px;
  border-top: 1px solid #b3acb2;
  background: linear-gradient(to right, #d6dfec, #d6dcea 30%, #d8dce9 58%, #d3eff1 66%, #d8f4ec 72%, #e6ebdd 77%, #f0dfdb 82%, #efdcdb);
  font-size: 14px;
  line-height: 20px;
  color: #1b1b1b;
}
.two-lines { display: flex; flex-direction: column; padding-bottom: 2px; }
.muted { color: #55595f; }
.weather { display: flex; align-items: center; gap: 9px; padding-left: 25px; }
.apps { display: flex; align-items: center; }
.app {
  position: relative;
  width: 55px;
  height: 50px;
}
.app.active::before {
  content: "";
  position: absolute;
  inset: 0 3px;
  border: 1px solid #dfe1ea;
  border-radius: 6px;
  background: #eceef6;
}
.app svg { position: relative; }
.app.active::after, .app.running::after {
  content: "";
  position: absolute;
  bottom: 0;
  width: 8px;
  height: 4px;
  border-radius: 2px;
  background: #80878c;
}
.app.active::after { width: 20px; background: #23808d; }
.badge, .count {
  display: flex;
  align-items: center;
  justify-content: center;
  width: 20px;
  height: 20px;
  border-radius: 10px;
  background: #23808d;
  color: #fff;
  font-size: 13px;
}
.badge { position: absolute; top: 3px; right: 5px; }
.search {
  display: flex;
  align-items: center;
  width: 275px;
  height: 39px;
  margin: 0 2px 0 4px;
  padding: 0 6px 0 14px;
  border: 1px solid #c9cdda;
  border-radius: 20px;
  background: #f3f5f9;
}
.search input { flex: 1; margin-left: 11px; font-size: 16px; }
.search input::placeholder { color: #5c5f63; opacity: 1; }
.tray {
  display: flex;
  align-items: center;
  justify-content: flex-end;
  padding-right: 25px;
}
.language { align-items: center; margin-left: 26px; }
.status { display: flex; align-items: center; gap: 10px; margin-left: 22px; }
.clock { align-items: flex-end; margin: 0 9px 0 20px; font-size: 15px; }
```
